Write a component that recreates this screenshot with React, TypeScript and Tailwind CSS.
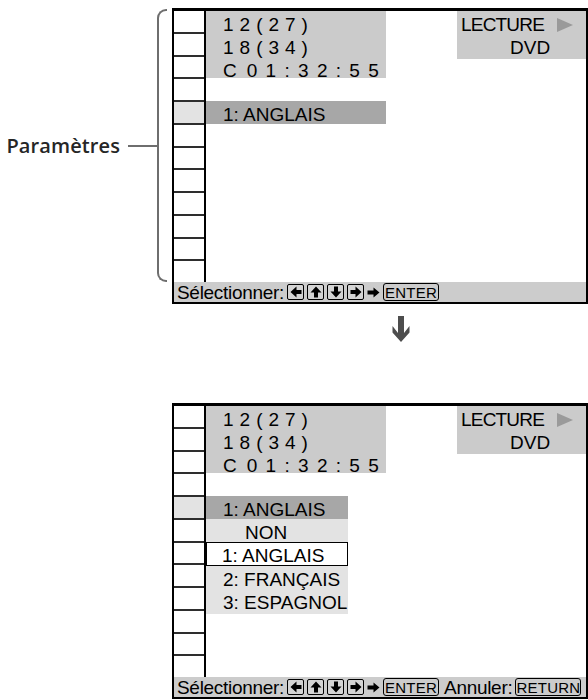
import React from "react";

const font = { fontFamily: '"Liberation Sans", Arial, sans-serif' };

const Arrow = ({ dir }: { dir: "left" | "up" | "down" | "right" }) => {
  const rot = { right: 0, down: 90, left: 180, up: 270 }[dir];
  return (
    <svg width="12" height="12" viewBox="0 0 12 12" style={{ transform: `rotate(${rot}deg)` }}>
      <path d="M0.5 4H5.5V0.5L11.5 6L5.5 11.5V8H0.5Z" fill="#000" />
    </svg>
  );
};

const KeyBox = ({ dir }: { dir: "left" | "up" | "down" | "right" }) => (
  <div className="w-[17px] h-[16px] shrink-0 border border-black rounded-[2px] flex items-center justify-center bg-[#d4d4d4]">
    <Arrow dir={dir} />
  </div>
);

const Label = ({ w, children }: { w: string; children: React.ReactNode }) => (
  <div className={`${w} h-[18px] shrink-0 border border-black rounded-[3px] flex items-center justify-center text-[15px] leading-none tracking-[0.2px]`}>
    {children}
  </div>
);

const Bar = ({ cancel }: { cancel?: boolean }) => (
  <div className="h-[20px] bg-[#cccccc] flex items-center pl-[3px] text-[19px] leading-none tracking-[-0.3px] whitespace-nowrap">
    <span className="shrink-0">Sélectionner:</span>
    <div className="flex items-center gap-[3px] ml-[3px] shrink-0">
      <KeyBox dir="left" />
      <KeyBox dir="up" />
      <KeyBox dir="down" />
      <KeyBox dir="right" />
    </div>
    <svg width="13" height="11" viewBox="0 0 13 11" className="mx-[3px] shrink-0">
      <path d="M0.5 3.5H6.5V0.5L12.5 5.5L6.5 10.5V7.5H0.5Z" fill="#000" />
    </svg>
    <Label w="w-[56px]">ENTER</Label>
    {cancel && (
      <>
        <span className="ml-[5px] mr-[3px] shrink-0">Annuler:</span>
        <Label w="w-[66px]">RETURN</Label>
      </>
    )}
  </div>
);

const Row = ({ className, children }: { className?: string; children?: React.ReactNode }) => (
  <div className={`h-[23px] pt-[3px] leading-[22px] whitespace-nowrap ${className ?? ""}`}>{children}</div>
);

const Panel = ({ second }: { second?: boolean }) => (
  <div className="w-[416px] border-x-2 border-t-[3px] border-b-2 border-black text-[19px] text-black" style={font}>
    <div className="flex h-[271px]">
      <div className="w-[32px] border-r-2 border-black flex flex-col">
        {Array.from({ length: 12 }).map((_, i) => (
          <div
            key={i}
            className={`flex-1 ${i > 0 ? "border-t-2 border-[#2e2e2e]" : ""} ${i === 4 ? "bg-[#e3e3e3]" : ""}`}
          />
        ))}
      </div>
      <div className="flex-1 flex flex-col">
        <div className="flex justify-between">
          <div className="w-[180px] h-[67px] bg-[#cbcbcb] pt-[2px] pl-[17px] leading-[23px] whitespace-nowrap">
            <div className="tracking-[6px]">12(27)</div>
            <div className="tracking-[6px]">18(34)</div>
            <div className="flex">
              <span>C</span>
              <span className="ml-[10px] tracking-[8.3px]">01:32:55</span>
            </div>
          </div>
          <div className="w-[129px] h-[48px] bg-[#cbcbcb] pt-[2px] leading-[23px] whitespace-nowrap">
            <div className="flex items-center pl-[4px]">
              <span className="tracking-[-0.8px]">LECTURE</span>
              <svg width="16" height="14" viewBox="0 0 16 14" className="ml-[13px]">
                <path d="M0 0L16 7L0 14Z" fill="#9a9a9a" />
              </svg>
            </div>
            <div className="pl-[53px]">DVD</div>
          </div>
        </div>
        <div className="h-[23px]" />
        {!second && <Row className="w-[180px] bg-[#a7a7a7] pl-[17px]">1: ANGLAIS</Row>}
        {second && (
          <div className="w-[142px]">
            <Row className="bg-[#a7a7a7] pl-[17px]">1: ANGLAIS</Row>
            <Row className="bg-[#e3e3e3] pl-[39px]">NON</Row>
            <div className="h-[24px] border-[1.5px] border-black bg-white pl-[15px] pt-[2px] leading-[22px] whitespace-nowrap">
              1: ANGLAIS
            </div>
            <Row className="bg-[#e3e3e3] pl-[17px]">2: FRANÇAIS</Row>
            <Row className="bg-[#e3e3e3] pl-[17px] h-[25px]">3: ESPAGNOL</Row>
          </div>
        )}
      </div>
    </div>
    <Bar cancel={second} />
  </div>
);

export default function App() {
  return (
    <div className="w-[588px] h-[700px] bg-white overflow-hidden">
      <div className="flex pt-[8px]">
        <div className="w-[172px] h-[274px] pt-[1px] pr-[5px] flex items-center justify-end">
          <span
            className="text-[20px] font-semibold text-[#262626] tracking-[0.1px]"
            style={{ fontFamily: '"Open Sans", "Noto Sans", sans-serif' }}
          >
            Paramètres
          </span>
          <div className="ml-[8px] w-[29px] h-[2px] bg-[#6e6e6e]" />
          <div className="w-[10px] h-[273px] border-l-2 border-y-2 border-[#6e6e6e] rounded-l-[9px]" />
        </div>
        <Panel />
      </div>
      <div className="h-[99px] pl-[390px] pt-[12px]">
        <svg width="22" height="26" viewBox="0 0 22 26">
          <path d="M8 0H14V17L19.5 10V16.5L11 26L2.5 16.5V10L8 17Z" fill="#4d4d4d" />
        </svg>
      </div>
      <div className="flex">
        <div className="w-[172px]" />
        <Panel second />
      </div>
    </div>
  );
}
